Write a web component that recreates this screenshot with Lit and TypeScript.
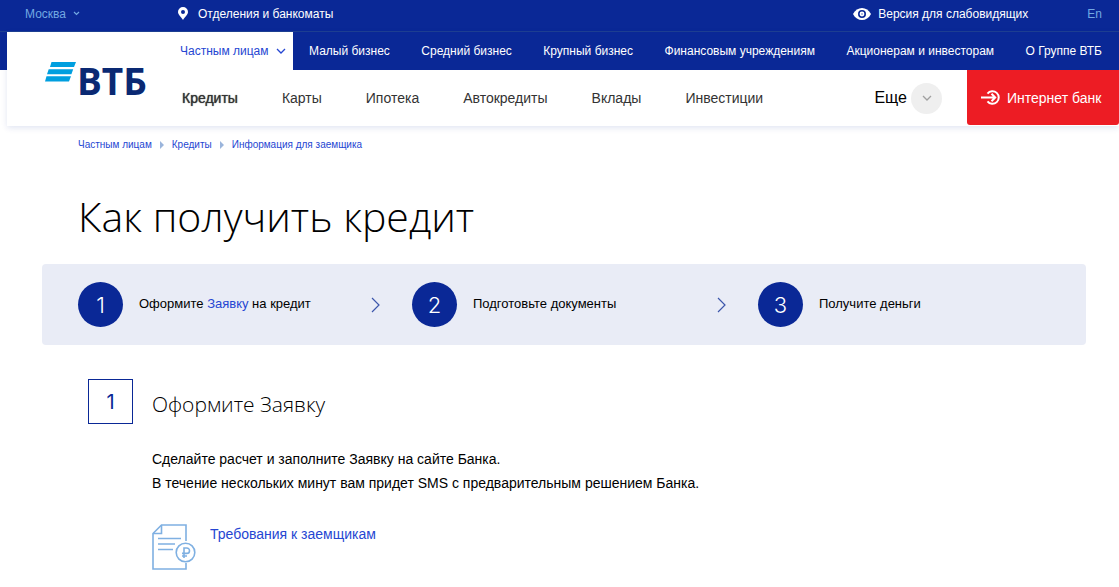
import { LitElement, html, css, svg } from "lit";
import { customElement } from "lit/decorators.js";

const chevronDown = svg`<path d="M1 1l4 4 4-4" fill="none" stroke="currentColor" stroke-width="1.3"/>`;

@customElement("app-root")
export class AppRoot extends LitElement {
  static styles = css`
    :host {
      display: block;
      min-height: 100vh;
      overflow-x: hidden;
      background: #fff;
      color: #000;
      font-family: "Liberation Sans", Arial, sans-serif;
      --blue: #0a2896;
      --link: #2546d2;
      --pale: #72a8e2;
    }
    * { box-sizing: border-box; }
    a { color: inherit; text-decoration: none; }
    a:hover { text-decoration: underline; }
    svg { display: block; flex: none; }
    button {
      display: flex;
      align-items: center;
      border: 0;
      padding: 0;
      background: none;
      color: inherit;
      font: inherit;
      cursor: pointer;
    }

    .topbar {
      display: flex;
      align-items: center;
      height: 32px;
      padding: 0 17px 4px 25px;
      border-bottom: 1px solid #1e3f92;
      background: var(--blue);
      color: #fff;
      font-size: 12px;
    }
    .city { gap: 7px; width: 153px; color: var(--pale); }
    .offices { display: flex; align-items: center; gap: 10px; }
    .vision { display: flex; align-items: center; gap: 7px; margin-left: auto; }
    .lang { margin-left: 59px; color: var(--pale); }

    .header {
      padding-left: 7px;
      background: linear-gradient(var(--blue), var(--blue)) top / 100% 38px no-repeat;
    }
    .panel {
      display: grid;
      grid-template: 38px 56px / 158px 1fr;
      background: #fff;
      box-shadow: 0 2px 6px rgba(10, 40, 150, 0.12);
    }
    .logo {
      grid-row: 1 / 3;
      display: flex;
      align-items: flex-start;
      gap: 1px;
      padding: 30px 0 0 38px;
    }
    .logo:hover { text-decoration: none; }
    .logo-name {
      color: #0a2973;
      font: 700 37px/38px "Open Sans", "Noto Sans", sans-serif;
    }
    .segments { display: flex; font-size: 12px; }
    .current {
      display: flex;
      align-items: center;
      gap: 7px;
      width: 128px;
      padding-left: 15px;
      color: var(--link);
    }
    .others {
      flex: 1;
      display: flex;
      align-items: center;
      justify-content: space-between;
      padding: 0 17px 0 16px;
      background: var(--blue);
      color: #fff;
      white-space: nowrap;
    }
    .menu {
      display: flex;
      align-items: center;
      padding-left: 17px;
      color: #333;
      font-size: 14px;
      white-space: nowrap;
    }
    .sections { display: flex; gap: 44px; }
    .active { text-shadow: 0 0 1px #333; }
    .more { gap: 4px; margin-left: auto; color: #000; font-size: 16px; }
    .more-mark {
      display: grid;
      place-items: center;
      width: 31px;
      height: 31px;
      border-radius: 50%;
      background: #efefef;
      color: #a0a0a0;
    }
    .bank {
      display: flex;
      align-items: center;
      gap: 6px;
      align-self: flex-start;
      width: 152px;
      height: 55px;
      margin-left: 25px;
      padding-left: 14px;
      border-radius: 0 0 3px 3px;
      background: #ed1c24;
      color: #fff;
      font-size: 14px;
    }

    .crumbs {
      display: flex;
      align-items: center;
      gap: 8px;
      padding: 12px 78px 0;
      color: var(--link);
      font-size: 10px;
      line-height: 14px;
    }
    h1 {
      margin: 36px 78px 0;
      font: 300 41px/56px "Open Sans", sans-serif;
    }
    .steps {
      display: grid;
      grid-template-columns: 334fr 346fr 292fr;
      margin: 20px 33px 0 42px;
      padding: 18px 36px;
      border-radius: 4px;
      background: #e9ecf6;
      list-style: none;
      font-size: 13px;
    }
    .step { display: flex; align-items: center; gap: 16px; }
    .step-number {
      display: grid;
      place-items: center;
      flex: none;
      width: 45px;
      height: 45px;
      border-radius: 50%;
      background: var(--blue);
      color: #fff;
      font: 300 22px/28px Inter, sans-serif;
    }
    .step-text { padding-bottom: 2px; }
    .step-arrow { margin: 0 32px 0 auto; }
    .inline-link { color: var(--link); }

    .details {
      display: grid;
      grid-template-columns: 45px 1fr;
      column-gap: 19px;
      margin: 34px 88px 0;
    }
    .box-number {
      display: grid;
      place-items: center;
      height: 45px;
      border: 1px solid var(--blue);
      color: var(--blue);
      font: 400 20px/28px Inter, sans-serif;
    }
    h2 {
      margin: 9px 0 0;
      font: 300 21px/32px "Open Sans", sans-serif;
    }
    .body { grid-column: 2; }
    p { margin: 23px 0 29px; font-size: 14px; line-height: 24px; }
    .document {
      display: flex;
      gap: 14px;
      color: var(--link);
      font-size: 14px;
      line-height: 20px;
    }
  `;

  private segments = [
    "Малый бизнес",
    "Средний бизнес",
    "Крупный бизнес",
    "Финансовым учреждениям",
    "Акционерам и инвесторам",
    "О Группе ВТБ",
  ];

  private sections = ["Кредиты", "Карты", "Ипотека", "Автокредиты", "Вклады", "Инвестиции"];

  private steps = [
    html`Оформите <a class="inline-link" href="#request">Заявку</a> на кредит`,
    "Подготовьте документы",
    "Получите деньги",
  ];

  private crumbArrow = html`<svg width="4" height="8" viewBox="0 0 4 8" aria-hidden="true">
    <path d="M0 0l4 4-4 4z" fill="#9bb5dc" />
  </svg>`;

  render() {
    return html`
      <div class="topbar">
        <button class="city">
          Москва
          <svg width="7" height="5" viewBox="0 0 7 5" aria-hidden="true">
            <path d="M1 1l2.500 2.500L6 1" fill="none" stroke="currentColor" stroke-width="1.200" />
          </svg>
        </button>
        <a class="offices" href="#offices">
          <svg width="10" height="13" viewBox="0 0 10 13" aria-hidden="true">
            <path fill="#fff" fill-rule="evenodd" d="M5 0a5 5 0 0 1 5 5c0 3-3.500 5-5 8-1.500-3-5-5-5-8a5 5 0 0 1 5-5zm0 3a2 2 0 1 0 0 4 2 2 0 0 0 0-4z" />
          </svg>
          Отделения и банкоматы
        </a>
        <a class="vision" href="#vision">
          <svg width="18" height="12" viewBox="0 0 18 12" aria-hidden="true">
            <path fill="#fff" d="M0 6c2-4 5.500-6 9-6s7 2 9 6c-2 4-5.500 6-9 6s-7-2-9-6z" />
            <circle cx="9" cy="6" r="3.200" fill="#fff" stroke="#0a2896" stroke-width="1.600" />
            <circle cx="9" cy="6" r="1" fill="#0a2896" opacity=".4" />
          </svg>
          Версия для слабовидящих
        </a>
        <a class="lang" href="#en">En</a>
      </div>

      <header class="header">
        <div class="panel">
          <a class="logo" href="#home">
            <svg width="31" height="20" viewBox="0 0 31 20" aria-hidden="true">
              <path fill="#009fdf" d="M6.500 0H31l-2 5H5zM3.700 7.200h24.500l-1.800 5H2zM1.500 14.200H26L24 19.400H0z" />
            </svg>
            <span class="logo-name">ВТБ</span>
          </a>
          <nav class="segments" aria-label="Разделы банка">
            <a class="current" href="#private">
              Частным лицам
              <svg width="10" height="6" viewBox="0 0 10 6" aria-hidden="true">${chevronDown}</svg>
            </a>
            <div class="others">
              ${this.segments.map((name) => html`<a href="#segment">${name}</a>`)}
            </div>
          </nav>
          <div class="menu">
            <nav class="sections" aria-label="Частным лицам">
              ${this.sections.map(
                (name, i) => html`<a class=${i === 0 ? "active" : ""} href="#section">${name}</a>`
              )}
            </nav>
            <button class="more">
              Еще
              <span class="more-mark">
                <svg width="10" height="6" viewBox="0 0 10 6" aria-hidden="true">${chevronDown}</svg>
              </span>
            </button>
            <a class="bank" href="#bank">
              <svg width="20" height="15" viewBox="0 0 20 15" aria-hidden="true">
                <g fill="none" stroke="#fff" stroke-width="2">
                  <path d="M6.500 3.600A6.300 6.300 0 1 1 6.500 11.400" />
                  <path d="M0 7.500h14M10.500 3.800l3.700 3.700-3.700 3.700" />
                </g>
              </svg>
              Интернет банк
            </a>
          </div>
        </div>
      </header>

      <nav class="crumbs" aria-label="Навигация">
        <a href="#private">Частным лицам</a>${this.crumbArrow}
        <a href="#credits">Кредиты</a>${this.crumbArrow}
        <a href="#info">Информация для заемщика</a>
      </nav>

      <main>
        <h1>Как получить кредит</h1>
        <ol class="steps">
          ${this.steps.map(
            (text, i) => html`<li class="step">
              <span class="step-number">${i + 1}</span>
              <span class="step-text">${text}</span>
              ${i < this.steps.length - 1
                ? html`<svg class="step-arrow" width="9" height="16" viewBox="0 0 9 16" aria-hidden="true">
                    <path d="M1 1l7 7-7 7" fill="none" stroke="#3c56ab" stroke-width="1.200" />
                  </svg>`
                : ""}
            </li>`
          )}
        </ol>

        <section class="details">
          <span class="box-number">1</span>
          <h2>Оформите Заявку</h2>
          <div class="body">
            <p>
              Сделайте расчет и заполните Заявку на сайте Банка.<br />
              В течение нескольких минут вам придет SMS с предварительным решением Банка.
            </p>
            <a class="document" href="#requirements">
              <svg width="44" height="47" viewBox="0 0 44 47" aria-hidden="true">
                <g fill="none" stroke="#7fb0e2" stroke-width="1.600">
                  <path d="M34 17V1H9.500L1 9.500V45H34V39" />
                  <path d="M9.500 1v8.500H1M6 14.500h23M6 20h17M6 25.500h15" />
                  <circle cx="33.500" cy="28.500" r="9.300" />
                  <path d="M32 34V24h2.800a2.700 2.700 0 0 1 0 5.400H30M30 32h5" />
                </g>
              </svg>
              Требования к заемщикам
            </a>
          </div>
        </section>
      </main>
    `;
  }
}
